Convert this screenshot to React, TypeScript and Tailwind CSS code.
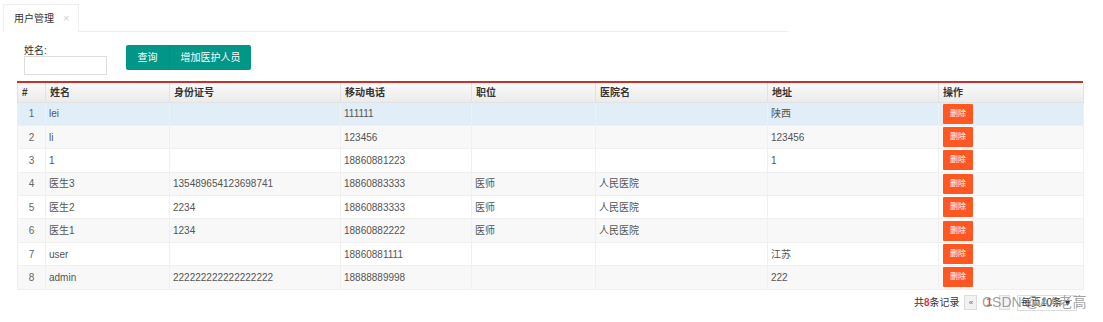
const rows = [
  { id: 1, name: "lei", card: "", phone: "111111", job: "", hospital: "", addr: "陕西" },
  { id: 2, name: "li", card: "", phone: "123456", job: "", hospital: "", addr: "123456" },
  { id: 3, name: "1", card: "", phone: "18860881223", job: "", hospital: "", addr: "1" },
  { id: 4, name: "医生3", card: "135489654123698741", phone: "18860883333", job: "医师", hospital: "人民医院", addr: "" },
  { id: 5, name: "医生2", card: "2234", phone: "18860883333", job: "医师", hospital: "人民医院", addr: "" },
  { id: 6, name: "医生1", card: "1234", phone: "18860882222", job: "医师", hospital: "人民医院", addr: "" },
  { id: 7, name: "user", card: "", phone: "18860881111", job: "", hospital: "", addr: "江苏" },
  { id: 8, name: "admin", card: "222222222222222222", phone: "18888889998", job: "", hospital: "", addr: "222" },
];

const cols = ["#", "姓名", "身份证号", "移动电话", "职位", "医院名", "地址", "操作"];
const widths = [28, 124, 171, 131, 124, 172, 171, 145];

export default function App() {
  return (
    <div className="relative h-[322px] w-[1103px] overflow-hidden bg-white font-['Liberation_Sans','Noto_Sans_CJK_SC',sans-serif] text-[10px] text-[#555]">
      {/* tab bar */}
      <div className="flex w-[788px] pl-[3px] pt-[4px]">
        <div className="flex h-[28px] w-[76px] items-center gap-[9px] border border-b-0 border-[#eee] bg-white pl-[10px] text-[10px] text-[#333]">
          <span>用户管理</span>
          <span className="text-[11px] text-[#d0d0d0]">×</span>
        </div>
        <div className="flex-1 border-b border-[#eee]" />
      </div>

      {/* search form */}
      <div className="flex items-start pl-[24px] pt-[13px]">
        <div className="flex flex-col">
          <span className="text-[10px] leading-[12px] text-[#333]">姓名:</span>
          <div className="mt-[-1px] h-[19px] w-[83px] border border-[#ddd] bg-white" />
        </div>
        <div className="ml-[19px] flex h-[25px] text-white">
          <button className="h-full w-[44px] rounded-l-[2px] border-r border-[#0b8a7e] bg-[#009688] text-[10px]">查询</button>
          <button className="h-full w-[81px] rounded-r-[2px] bg-[#009688] text-[10px]">增加医护人员</button>
        </div>
      </div>

      {/* table */}
      <div className="ml-[17px] mt-[6px] w-[1066px] border-t-2 border-[#c9302c]">
        <table className="w-full table-fixed border-collapse border border-t-0 border-[#e2e2e2]">
          <colgroup>
            {widths.map((w, i) => (
              <col key={i} style={{ width: w }} />
            ))}
          </colgroup>
          <thead>
            <tr className="h-[19px] bg-gradient-to-b from-[#fafafa] to-[#ebebeb]">
              {cols.map((c, i) => (
                <th
                  key={c}
                  className={`border-x border-b border-[#e2e2e2] px-[4px] pt-[1px] text-left text-[10px] font-bold text-[#333] ${i === 0 ? "text-center" : ""}`}
                >
                  {c}
                </th>
              ))}
            </tr>
          </thead>
          <tbody>
            {rows.map((r, i) => (
              <tr
                key={r.id}
                className={`h-[23.4px] ${i === 0 ? "bg-[#e1eef7]" : i % 2 === 1 ? "bg-[#f8f8f8]" : "bg-white"}`}
              >
                <td className="border border-[#f0f0f0] text-center text-[#666]">{r.id}</td>
                <td className="border border-[#f0f0f0] px-[3px]">{r.name}</td>
                <td className="border border-[#f0f0f0] px-[3px]">{r.card}</td>
                <td className="border border-[#f0f0f0] px-[3px]">{r.phone}</td>
                <td className="border border-[#f0f0f0] px-[3px]">{r.job}</td>
                <td className="border border-[#f0f0f0] px-[3px]">{r.hospital}</td>
                <td className="border border-[#f0f0f0] px-[3px]">{r.addr}</td>
                <td className="border border-[#f0f0f0] px-[4px]">
                  <button className="flex h-[20px] w-[30px] items-center justify-center rounded-[1px] bg-[#ff5722] text-[8px] text-white">
                    删除
                  </button>
                </td>
              </tr>
            ))}
          </tbody>
        </table>
      </div>

      {/* pagination */}
      <div className="mt-[5px] flex items-center justify-end pr-[26px] text-[10px] text-[#333]">
        <span>
          共<span className="font-bold text-[#e4393c]">8</span>条记录
        </span>
        <span className="ml-[5px] flex h-[15px] w-[13px] items-center justify-center border border-[#ddd] bg-[#f2f2f2] text-[8px] text-[#666]">
          «
        </span>
        <span className="ml-[9px] font-bold text-[#e4393c]">1</span>
        <span className="ml-[7px] h-[15px] w-[11px] border border-[#ddd] bg-[#f2f2f2]" />
        <span className="ml-[7px] flex h-[16px] w-[60px] items-center border border-[#ddd] pl-[3px] text-[10px] text-[#333]">
          每页10条 ▾
        </span>
      </div>

      {/* watermark */}
      <div className="absolute left-[982px] top-[292px] text-[14px] text-[#888]/80">CSDN @AA老高</div>
    </div>
  );
}
